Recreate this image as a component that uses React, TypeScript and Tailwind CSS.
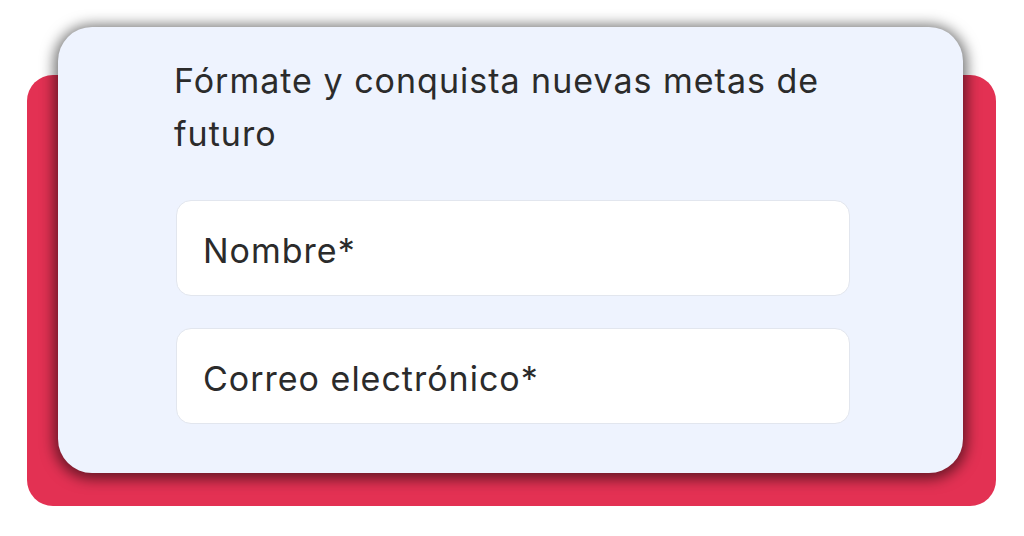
import React from "react";

export default function App() {
  return (
    <div className="w-[1024px] h-[536px] bg-white relative overflow-hidden" style={{ fontFamily: "Inter, 'Noto Sans', sans-serif" }}>
      <div className="absolute left-[27px] top-[75px] w-[969px] h-[431px] rounded-[26px] bg-[#e33153]" />
      <div className="absolute left-[58px] top-[27px] w-[905px] h-[446px] rounded-[34px] bg-[#eef3fe] shadow-[0_2px_14px_4px_rgba(0,0,0,0.55)] pl-[116px] pr-[113px] pt-[27px]">
        <p className="text-[34px] leading-[53px] tracking-[1px] text-[#2b2b2b] max-w-[670px]">
          Fórmate y conquista nuevas metas de futuro
        </p>
        <div className="mt-[40px] flex flex-col gap-[32px] pl-[2px]">
          <div className="h-[96px] rounded-[15px] bg-white border border-[#e2e6ee] flex items-center pl-[26px] pt-[4px] text-[34px] tracking-[1px] text-[#2b2b2b]">
            Nombre*
          </div>
          <div className="h-[96px] rounded-[15px] bg-white border border-[#e2e6ee] flex items-center pl-[26px] pt-[4px] text-[34px] tracking-[1px] text-[#2b2b2b]">
            Correo electrónico*
          </div>
        </div>
      </div>
    </div>
  );
}
